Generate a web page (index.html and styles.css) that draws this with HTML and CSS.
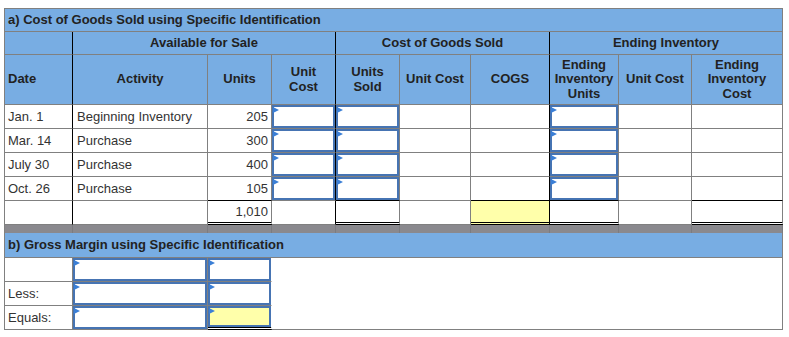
FILE: index.html
```html
<!DOCTYPE html>
<html>
<head>
<meta charset="utf-8">
<link rel="stylesheet" href="styles.css">
</head>
<body>
<table class="sheet">
  <colgroup>
    <col class="w1"><col class="w2"><col class="w3"><col class="w4"><col class="w5">
    <col class="w6"><col class="w7"><col class="w8"><col class="w9"><col class="w10">
  </colgroup>
  <tr class="r-title">
    <td colspan="10" class="hd title">a) Cost of Goods Sold using Specific Identification</td>
  </tr>
  <tr class="r-h2">
    <td class="hd br-k"></td>
    <td colspan="3" class="hd c br-k">Available for Sale</td>
    <td colspan="3" class="hd c br-k">Cost of Goods Sold</td>
    <td colspan="3" class="hd c">Ending Inventory</td>
  </tr>
  <tr class="r-h3">
    <td class="hd br-k">Date</td>
    <td class="hd c">Activity</td>
    <td class="hd c">Units</td>
    <td class="hd c br-k">Unit<br>Cost</td>
    <td class="hd c">Units<br>Sold</td>
    <td class="hd c">Unit Cost</td>
    <td class="hd c br-k">COGS</td>
    <td class="hd c">Ending<br>Inventory<br>Units</td>
    <td class="hd c">Unit Cost</td>
    <td class="hd c">Ending<br>Inventory<br>Cost</td>
  </tr>
  <tr class="r-data">
    <td class="txt br-k">Jan. 1</td>
    <td class="txt act">Beginning Inventory</td>
    <td class="num">205</td>
    <td class="inp br-k"><div class="box"><span class="flag"></span></div></td>
    <td class="inp"><div class="box"><span class="flag"></span></div></td>
    <td></td>
    <td class="br-k"></td>
    <td class="inp"><div class="box"><span class="flag"></span></div></td>
    <td></td>
    <td></td>
  </tr>
  <tr class="r-data">
    <td class="txt br-k">Mar. 14</td>
    <td class="txt act">Purchase</td>
    <td class="num">300</td>
    <td class="inp br-k"><div class="box"><span class="flag"></span></div></td>
    <td class="inp"><div class="box"><span class="flag"></span></div></td>
    <td></td>
    <td class="br-k"></td>
    <td class="inp"><div class="box"><span class="flag"></span></div></td>
    <td></td>
    <td></td>
  </tr>
  <tr class="r-data">
    <td class="txt br-k">July 30</td>
    <td class="txt act">Purchase</td>
    <td class="num">400</td>
    <td class="inp br-k"><div class="box"><span class="flag"></span></div></td>
    <td class="inp"><div class="box"><span class="flag"></span></div></td>
    <td></td>
    <td class="br-k"></td>
    <td class="inp"><div class="box"><span class="flag"></span></div></td>
    <td></td>
    <td></td>
  </tr>
  <tr class="r-data">
    <td class="txt br-k">Oct. 26</td>
    <td class="txt act">Purchase</td>
    <td class="num bb-k">105</td>
    <td class="inp br-k"><div class="box"><span class="flag"></span></div></td>
    <td class="inp bb-k"><div class="box"><span class="flag"></span></div></td>
    <td></td>
    <td class="br-k bb-k"></td>
    <td class="inp bb-k"><div class="box"><span class="flag"></span></div></td>
    <td></td>
    <td class="bb-k"></td>
  </tr>
  <tr class="r-total">
    <td class="br-k"></td>
    <td></td>
    <td class="num dbl">1,010</td>
    <td class="br-k"></td>
    <td class="dbl"></td>
    <td></td>
    <td class="br-k dbl yellow"></td>
    <td class="dbl"></td>
    <td></td>
    <td class="dbl"></td>
  </tr>
  <tr class="r-sep">
    <td></td><td></td><td></td><td></td><td></td>
    <td></td><td></td><td></td><td></td><td></td>
  </tr>
  <tr class="r-title2">
    <td colspan="10" class="hd title">b) Gross Margin using Specific Identification</td>
  </tr>
  <tr class="r-data">
    <td class="txt"></td>
    <td class="inp"><div class="box"><span class="flag"></span></div></td>
    <td class="inp nbr"><div class="box"><span class="flag"></span></div></td>
    <td colspan="7" rowspan="3" class="blank"></td>
  </tr>
  <tr class="r-data">
    <td class="txt">Less:</td>
    <td class="inp"><div class="box"><span class="flag"></span></div></td>
    <td class="inp nbr"><div class="box"><span class="flag"></span></div></td>
  </tr>
  <tr class="r-data">
    <td class="txt">Equals:</td>
    <td class="inp"><div class="box"><span class="flag"></span></div></td>
    <td class="inp nbr dbl"><div class="box short yellow"><span class="flag"></span></div></td>
  </tr>
</table>
</body>
</html>
```

FILE: styles.css
```css
html, body {
  background: #ffffff;
}
body {
  margin: 8px 0 0 4px;
  font-family: "Liberation Sans", Arial, sans-serif;
  font-size: 13px;
  color: #333333;
}
.sheet {
  border-collapse: separate;
  border-spacing: 0;
  table-layout: fixed;
  width: 779px;
  border-top: 1px solid #808080;
  border-left: 1px solid #808080;
}
.w1 { width: 68px; }
.w2 { width: 135px; }
.w3 { width: 64px; }
.w4 { width: 64px; }
.w5 { width: 64px; }
.w6 { width: 71px; }
.w7 { width: 79px; }
.w8 { width: 69px; }
.w9 { width: 73px; }
.w10 { width: 91px; }

.sheet td {
  box-sizing: border-box;
  border-right: 1px solid #808080;
  border-bottom: 1px solid #808080;
  padding: 0;
  vertical-align: middle;
  white-space: nowrap;
  overflow: hidden;
}

.r-title td { height: 23px; }
.r-h2 td { height: 23px; }
.r-h3 td { height: 50px; }
.r-data td { height: 24px; }
.r-total td { height: 24px; }
.sheet .r-sep td { height: 8px; background: #8a898e; border-bottom: none; border-right-color: #7c7c80; }
.r-title2 td { height: 25px; }

.sheet td.hd {
  background: #78ade3;
  color: #222222;
  font-weight: bold;
  line-height: 14.5px;
  padding-left: 3px;
}
.sheet td.hd.c {
  text-align: center;
  padding-left: 0;
}
.sheet td.title {
  padding-left: 3px;
  padding-top: 1px;
}
.sheet td.txt {
  padding-left: 3px;
}
.sheet td.act {
  padding-left: 4px;
}
.sheet td.num {
  text-align: right;
  padding-right: 3px;
}
.sheet td.br-k {
  border-right-color: #000000;
}
.sheet td.bb-k {
  border-bottom-color: #000000;
}
.sheet td.dbl {
  border-bottom: 3px double #000000;
}
.sheet td.nbr {
  border-right-color: #ffffff;
}
.yellow {
  background: #ffffaa;
}
.sheet td.blank {
  border-right-color: #808080;
}

.box {
  position: relative;
  box-sizing: border-box;
  height: 23px;
  border: 2px solid #4674b3;
}
.box.short {
  height: 21px;
}
.flag {
  position: absolute;
  left: -1px;
  top: 0;
  width: 0;
  height: 0;
  border-left: 6px solid #3b7fd6;
  border-top: 3px solid transparent;
  border-bottom: 3px solid transparent;
}
```
